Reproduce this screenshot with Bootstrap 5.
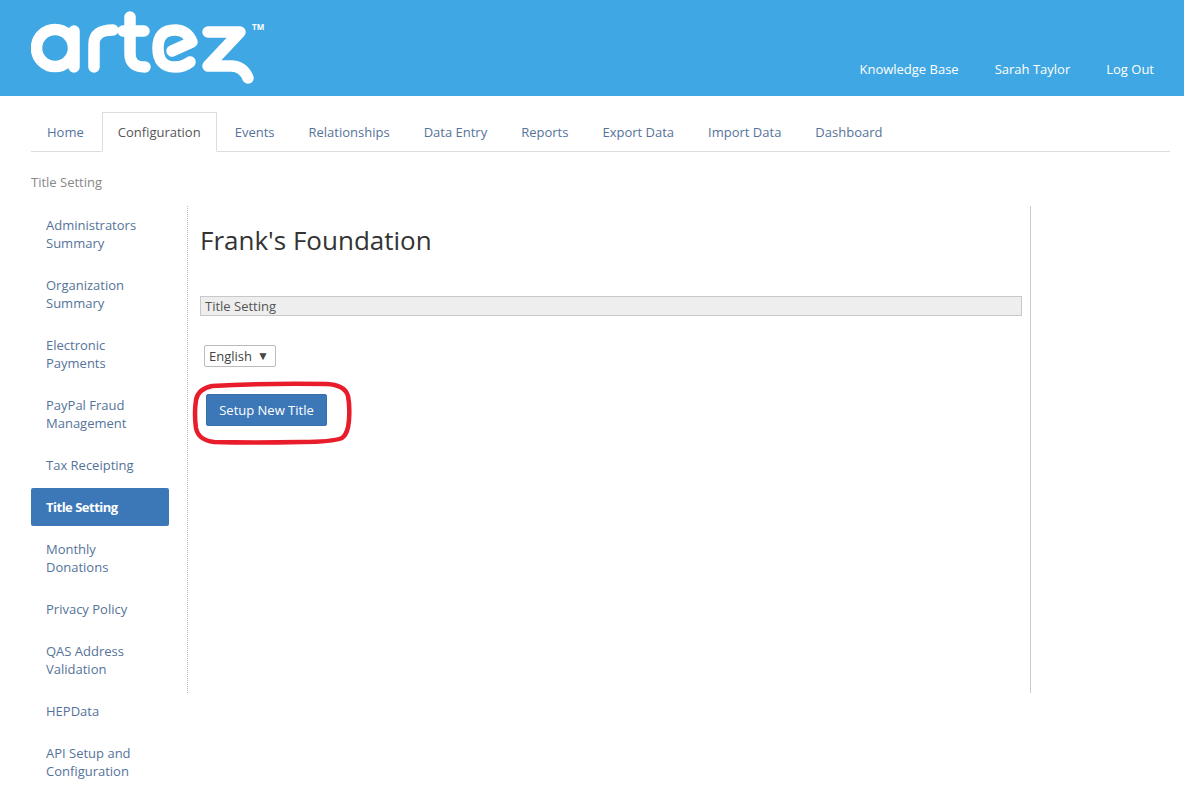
<!DOCTYPE html>
<html lang="en">
<head>
  <meta charset="UTF-8">
  <meta name="viewport" content="width=device-width, initial-scale=1.0">
  <title>Title Setting</title>
  <link href="https://cdn.jsdelivr.net/npm/bootstrap@5.3.0/dist/css/bootstrap.min.css" rel="stylesheet">
  <style>
    body {
      font-family: "Open Sans", "Liberation Sans", sans-serif;
      font-size: 13px;
      line-height: 18px;
      color: #333;
      background: #fff;
      overflow: hidden;
    }
    .top-bar {
      height: 96px;
      background-color: #3fa7e3;
      padding: 0 14px 0 31px;
    }
    .top-bar a {
      color: #fff;
      text-decoration: none;
      padding: 0 16px;
      margin-left: 4px;
      line-height: 18px;
    }
    .top-links {
      padding-top: 60px;
    }
    .logo-wrap {
      position: relative;
      width: 240px;
      height: 96px;
    }
    .logo-tm {
      position: absolute;
      left: 221px;
      top: 22px;
      font-size: 8px;
      font-weight: 700;
      line-height: 10px;
      color: #fff;
    }
    .page-wrap {
      padding: 16px 14px 0 31px;
    }
    .main-tabs {
      border-bottom-color: #ddd;
    }
    .main-tabs .nav-link {
      color: #55739a;
      padding: 10px 15px;
      margin-right: 2px;
      border-radius: 0;
      line-height: 18px;
    }
    .main-tabs .nav-link.active {
      color: #555;
      border-color: #ddd #ddd #fff;
    }
    .crumb-text {
      color: #888;
      margin: 21px 0 15px;
    }
    .side-col {
      width: 138px;
      margin-right: 18px;
      flex: none;
    }
    .side-col .nav-link {
      color: #55739a;
      padding: 10px 15px;
      border-radius: 2px;
      margin-bottom: 4px;
    }
    .side-col .nav-link.active {
      background-color: #3c78b8;
      color: #fff;
      font-weight: 700;
      letter-spacing: -0.5px;
    }
    .content-col {
      position: relative;
      width: 844px;
      height: 487px;
      padding: 0 8px 0 12px;
      border-left: 1px dotted #bbb;
      border-right: 1px solid #ccc;
      flex: none;
    }
    .org-title {
      font-family: inherit;
      font-size: 26px;
      line-height: 30px;
      font-weight: 400;
      margin: 19px 0 41px;
    }
    .section-bar {
      height: 20px;
      line-height: 18px;
      padding: 0 4px;
      color: #555;
      background: #eee;
      border: 1px solid #c8c8c8;
    }
    .lang-box {
      display: flex;
      align-items: center;
      height: 22px;
      width: 72px;
      margin: 29px 0 0 4px;
      padding: 0 4px;
      color: #444;
      background: #fff;
      border: 1px solid #bbb;
      border-radius: 2px;
    }
    .lang-arrow {
      font-size: 12px;
      margin-left: 5px;
    }
    .setup-btn {
      display: block;
      width: 121px;
      height: 32px;
      margin: 27px 0 0 6px;
      padding: 2px 0 0;
      font-size: 13px;
      color: #fff;
      background-color: #3c78b8;
      border: 1px solid #3670ac;
      border-radius: 2px;
    }
    .red-ring {
      position: absolute;
      left: 4px;
      top: 174px;
    }
  </style>
</head>
<body>
  <header class="top-bar d-flex justify-content-between align-items-start">
    <div class="logo-wrap">
      <svg width="240" height="96" viewBox="31 0 240 96" fill="none" stroke="#fff" stroke-width="11.5" stroke-linecap="round" stroke-linejoin="round">
        <circle cx="55" cy="48" r="18.5"/>
        <path d="M74 31V67"/>
        <path d="M94 67V44Q94 30 113 30"/>
        <path d="M130 17V54Q130 67 145 67"/>
        <path d="M123 31H144"/>
        <path d="M172 51L192 42Q187 30 175 30Q158 30 158 48Q158 67 175 67Q184 67 190 62"/>
        <path d="M208 32H240L208 66H231Q243 66 248 78"/>
      </svg>
      <span class="logo-tm">TM</span>
    </div>
    <nav class="d-flex top-links">
      <a href="#">Knowledge Base</a>
      <a href="#">Sarah Taylor</a>
      <a href="#">Log Out</a>
    </nav>
  </header>

  <div class="page-wrap">
    <ul class="nav nav-tabs main-tabs">
      <li class="nav-item"><a class="nav-link" href="#">Home</a></li>
      <li class="nav-item"><a class="nav-link active" href="#">Configuration</a></li>
      <li class="nav-item"><a class="nav-link" href="#">Events</a></li>
      <li class="nav-item"><a class="nav-link" href="#">Relationships</a></li>
      <li class="nav-item"><a class="nav-link" href="#">Data Entry</a></li>
      <li class="nav-item"><a class="nav-link" href="#">Reports</a></li>
      <li class="nav-item"><a class="nav-link" href="#">Export Data</a></li>
      <li class="nav-item"><a class="nav-link" href="#">Import Data</a></li>
      <li class="nav-item"><a class="nav-link" href="#">Dashboard</a></li>
    </ul>

    <div class="crumb-text">Title Setting</div>

    <div class="d-flex align-items-start">
      <nav class="nav flex-column side-col">
        <a class="nav-link" href="#">Administrators Summary</a>
        <a class="nav-link" href="#">Organization Summary</a>
        <a class="nav-link" href="#">Electronic Payments</a>
        <a class="nav-link" href="#">PayPal Fraud Management</a>
        <a class="nav-link" href="#">Tax Receipting</a>
        <a class="nav-link active" href="#">Title Setting</a>
        <a class="nav-link" href="#">Monthly Donations</a>
        <a class="nav-link" href="#">Privacy Policy</a>
        <a class="nav-link" href="#">QAS Address Validation</a>
        <a class="nav-link" href="#">HEPData</a>
        <a class="nav-link" href="#">API Setup and Configuration</a>
      </nav>

      <main class="content-col">
        <h1 class="org-title">Frank's Foundation</h1>
        <div class="section-bar">Title Setting</div>
        <div class="lang-box">English <span class="lang-arrow">&#9660;</span></div>
        <button type="button" class="btn setup-btn">Setup New Title</button>
        <svg class="red-ring" width="162" height="66" viewBox="0 0 162 66" fill="none" stroke="#e81c2a" stroke-width="4.5">
          <path d="M20 6Q70 3 135 4Q153 5 156 16Q158 26 157 40Q156 54 150 58Q140 62 110 62Q60 63 22 62Q6 60 4 48Q2 34 4 20Q6 9 20 6Z"/>
        </svg>
      </main>
    </div>
  </div>

  <script src="https://cdn.jsdelivr.net/npm/bootstrap@5.3.0/dist/js/bootstrap.bundle.min.js"></script>
</body>
</html>
